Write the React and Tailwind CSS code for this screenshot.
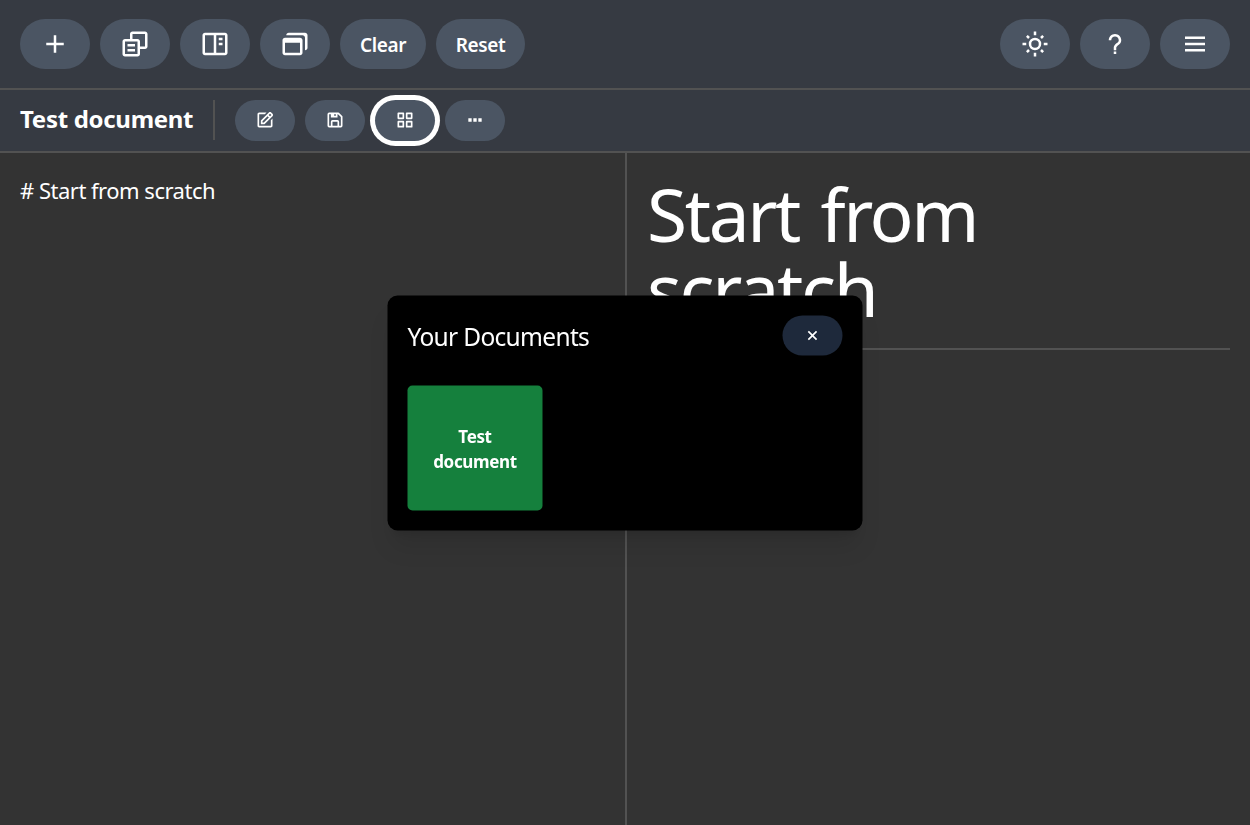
import React from "react";
import {
  BiPlus,
  BiCopyAlt,
  BiBookContent,
  BiWindows,
  BiQuestionMark,
  BiMenu,
  BiEdit,
  BiSave,
  BiGridAlt,
  BiDotsHorizontal,
  BiX,
} from "react-icons/bi";

const RAY_ANGLES = [0, 90, 180, 270];

function SunIcon() {
  return (
    <svg viewBox="0 0 24 24" width="30" height="30" fill="none" stroke="currentColor" strokeWidth="2">
      <circle cx="12" cy="12" r="4" />
      {RAY_ANGLES.map((angle) => (
        <g key={angle} transform={`rotate(${angle} 12 12)`}>
          <path d="M12 2v3" />
          <path d="M18.5 5.5 16.8 7.2" />
        </g>
      ))}
    </svg>
  );
}

function PillButton({ children, className = "w-[70px]" }) {
  return (
    <button
      className={`flex h-[50px] items-center justify-center rounded-[25px] bg-[#4b5563] text-xl font-semibold text-white ${className}`}
    >
      {children}
    </button>
  );
}

function SmallButton({ children, className = "" }) {
  return (
    <button
      className={`flex h-[41px] w-[60px] items-center justify-center rounded-[25px] bg-[#4b5563] pb-px text-white ${className}`}
    >
      {children}
    </button>
  );
}

function TopBar() {
  return (
    <header className="flex h-[90px] items-start justify-between border-b-2 border-[#525252] bg-[#363a42] px-5 pt-[19px]">
      <div className="flex gap-[10px]">
        <PillButton><BiPlus size={30} /></PillButton>
        <PillButton><BiCopyAlt size={30} /></PillButton>
        <PillButton><BiBookContent size={30} /></PillButton>
        <PillButton><BiWindows size={30} /></PillButton>
        <PillButton className="w-[86px]">
          <span className="pt-[2px] text-[19px] tracking-[-0.4px]">Clear</span>
        </PillButton>
        <PillButton className="w-[89px]">
          <span className="pt-[2px] text-[19px] tracking-[-0.4px]">Reset</span>
        </PillButton>
      </div>
      <div className="flex gap-[10px]">
        <PillButton><SunIcon /></PillButton>
        <PillButton><BiQuestionMark size={30} /></PillButton>
        <PillButton><BiMenu size={30} /></PillButton>
      </div>
    </header>
  );
}

function DocumentBar() {
  return (
    <div className="flex h-[63px] items-start border-b-2 border-[#525252] bg-[#363a42] pt-[10px] pl-5">
      <div className="flex h-10 w-[195px] items-center border-r-2 border-[#525252]">
        <h1 className="pb-[2px] text-[24px] font-bold tracking-[-0.3px] whitespace-nowrap text-white">
          Test document
        </h1>
      </div>
      <div className="ml-5 flex gap-[10px]">
        <SmallButton><BiEdit size={20} /></SmallButton>
        <SmallButton><BiSave size={20} /></SmallButton>
        <SmallButton className="ring-[5px] ring-white"><BiGridAlt size={20} /></SmallButton>
        <SmallButton><BiDotsHorizontal size={20} /></SmallButton>
      </div>
    </div>
  );
}

function DocumentsDialog() {
  return (
    <section className="fixed top-[413px] left-1/2 w-[475px] -translate-x-1/2 -translate-y-1/2 rounded-[10px] bg-black p-5 shadow-xl">
      <div className="flex items-start justify-between">
        <h2 className="pt-[3px] text-[24.5px] leading-9 tracking-[-0.68px] text-white">
          Your Documents
        </h2>
        <button className="flex h-10 w-[60px] items-center justify-center rounded-[25px] bg-[#1e293b] text-white">
          <BiX size={20} />
        </button>
      </div>
      <button className="mt-[30px] flex h-[125px] w-[135px] items-center justify-center rounded-[5px] bg-[#15803d] px-5 pt-px text-center text-[17px] leading-[25px] font-bold tracking-[-0.35px] text-white">
        Test document
      </button>
    </section>
  );
}

export default function App() {
  return (
    <div className="flex h-screen flex-col overflow-hidden bg-[#333333] font-['Noto_Sans','Open_Sans',sans-serif] text-white">
      <TopBar />
      <DocumentBar />
      <main className="flex min-h-0 flex-1">
        <div className="w-[625px] px-5 pt-[21px] text-[22px] leading-8 tracking-[-0.5px]">
          # Start from scratch
        </div>
        <div className="flex-1 border-l-2 border-[#525252] pt-[23px] pr-5 pl-5">
          <div className="border-b-2 border-[#525252] pb-[22px]">
            <h1 className="w-[420px] text-[73px] leading-[75px] tracking-[-2.4px] [word-spacing:5px]">
              Start from scratch
            </h1>
          </div>
        </div>
      </main>
      <DocumentsDialog />
    </div>
  );
}
